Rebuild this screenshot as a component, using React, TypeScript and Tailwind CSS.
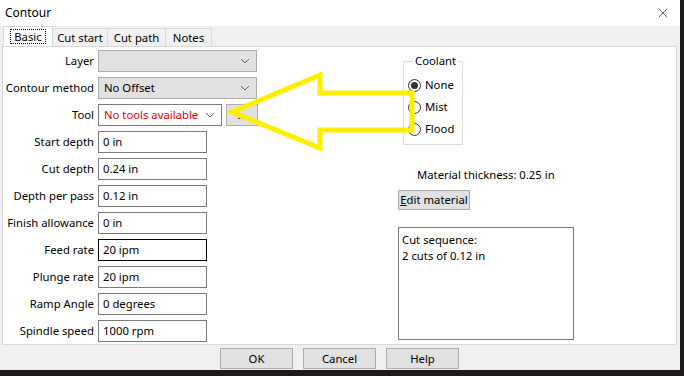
import { X } from "lucide-react";

const font = { fontFamily: '"Noto Sans", "Liberation Sans", sans-serif' };

function Chevron() {
  return (
    <svg width="10" height="6" viewBox="0 0 10 6" className="shrink-0">
      <path d="M1 1 L5 5 L9 1" fill="none" stroke="#606060" strokeWidth="1" />
    </svg>
  );
}

function Combo({ text, white, red, w }: { text: string; white?: boolean; red?: boolean; w: string }) {
  return (
    <div className={`${w} h-[22px] flex items-center justify-between pl-[5px] pr-[6px] border ${white ? "bg-white border-[#7a7a7a]" : "bg-[#e1e1e1] border-[#adadad]"}`}>
      <span className={red ? "text-[#e00000] whitespace-nowrap" : "text-black whitespace-nowrap"}>{text}</span>
      <Chevron />
    </div>
  );
}

function Field({ value, focused }: { value: string; focused?: boolean }) {
  return (
    <div className={`w-[109px] h-[22px] flex items-center pl-[4px] bg-white border ${focused ? "border-black" : "border-[#7a7a7a]"}`}>
      {value}
    </div>
  );
}

function Row({ label, children }: { label: string; children: React.ReactNode }) {
  return (
    <div className="flex items-center h-[22px] gap-[4px]">
      <div className="w-[91px] text-right whitespace-nowrap">{label}</div>
      {children}
    </div>
  );
}

function Radio({ label, checked }: { label: string; checked?: boolean }) {
  return (
    <div className="flex items-center gap-[4px] h-[22px]">
      <div className="w-[13px] h-[13px] rounded-full border border-[#333] bg-white flex items-center justify-center">
        {checked && <div className="w-[7px] h-[7px] rounded-full bg-[#333]" />}
      </div>
      <span>{label}</span>
    </div>
  );
}

function Btn({ label }: { label: string }) {
  return (
    <div className="w-[73px] h-[21px] flex items-center justify-center bg-[#e1e1e1] border border-[#adadad]">
      {label}
    </div>
  );
}

export default function App() {
  const tabs = [
    { t: "Cut start", w: "w-[55px]" },
    { t: "Cut path", w: "w-[58px]" },
    { t: "Notes", w: "w-[46px]" },
  ];

  return (
    <div className="w-[684px] h-[376px] bg-[#1f1a1a] overflow-hidden text-[11.3px] text-black leading-none" style={font}>
      <div className="w-[680px] h-[370px] flex flex-col bg-[#f0f0f0] relative">
        {/* title bar */}
        <div className="h-[26px] bg-white flex items-center justify-between pl-[5px] pr-[9px]">
          <span className="text-[12px]">Contour</span>
          <X size={16} strokeWidth={1} color="#111" />
        </div>

        {/* tabs */}
        <div className="h-[20px] flex items-end pl-[3px]">
          <div className="h-[20px] w-[50px] bg-white border border-b-0 border-[#d9d9d9] flex items-center justify-center">
            <span className="outline outline-1 outline-dotted outline-black px-[3px] py-[1px]">Basic</span>
          </div>
          {tabs.map((t) => (
            <div key={t.t} className={`${t.w} h-[18px] border border-b-0 border-l-0 border-[#d9d9d9] flex items-center justify-center whitespace-nowrap`}>
              {t.t}
            </div>
          ))}
        </div>

        {/* page */}
        <div className="ml-[2px] w-[675px] h-[299px] bg-white border border-[#d9d9d9] flex">
          <div className="flex flex-col gap-[5px] pt-[3px] w-[300px]">
            <Row label="Layer">
              <Combo text="" w="w-[159px]" />
            </Row>
            <Row label="Contour method">
              <Combo text="No Offset" w="w-[159px]" />
            </Row>
            <Row label="Tool">
              <Combo text="No tools available" white red w="w-[124px]" />
              <div className="w-[32px] h-[22px] bg-[#e1e1e1] border border-[#adadad] flex items-center justify-center">...</div>
            </Row>
            <Row label="Start depth"><Field value="0 in" /></Row>
            <Row label="Cut depth"><Field value="0.24 in" /></Row>
            <Row label="Depth per pass"><Field value="0.12 in" /></Row>
            <Row label="Finish allowance"><Field value="0 in" /></Row>
            <Row label="Feed rate"><Field value="20 ipm" focused /></Row>
            <Row label="Plunge rate"><Field value="20 ipm" /></Row>
            <Row label="Ramp Angle"><Field value="0 degrees" /></Row>
            <Row label="Spindle speed"><Field value="1000 rpm" /></Row>
          </div>

          <div className="flex flex-col pl-[95px] pt-[7px]">
            <fieldset className="ml-[5px] w-[60px] h-[91px] border border-[#dcdcdc] pl-[4px]">
              <legend className="ml-[5px] px-[2px] leading-[14px]">Coolant</legend>
              <div className="flex flex-col mt-[6px]">
                <Radio label="None" checked />
                <Radio label="Mist" />
                <Radio label="Flood" />
              </div>
            </fieldset>
            <div className="mt-[24px] ml-[19px] h-[14px] whitespace-nowrap">Material thickness: 0.25 in</div>
            <div className="mt-[7px] w-[72px] h-[20px] bg-[#e1e1e1] border border-[#adadad] flex items-center justify-center whitespace-nowrap">
              <span><span className="underline">E</span>dit material</span>
            </div>
            <div className="mt-[17px] w-[176px] h-[113px] border border-[#7a7a7a] px-[3px] pt-[4px] leading-[16px]">
              <div>Cut sequence:</div>
              <div>2 cuts of 0.12 in</div>
            </div>
          </div>
        </div>

        {/* footer */}
        <div className="flex gap-[10px] pl-[220px] pt-[3px]">
          <Btn label="OK" />
          <Btn label="Cancel" />
          <Btn label="Help" />
        </div>

        {/* yellow annotation arrow */}
        <svg className="absolute left-0 top-0 pointer-events-none" width="680" height="370">
          <polygon
            points="232,112 320,75 320,93 412,93 412,130 320,130 320,148"
            fill="none"
            stroke="#ffee00"
            strokeWidth="5"
            strokeLinejoin="miter"
          />
        </svg>
      </div>
    </div>
  );
}
